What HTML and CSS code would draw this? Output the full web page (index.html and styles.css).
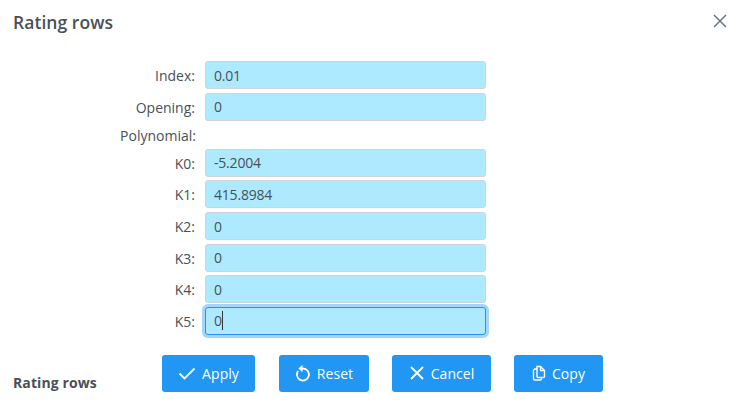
FILE: index.html
```
<!DOCTYPE html>
<html lang="en">
<head>
<meta charset="utf-8">
<title>Rating rows</title>
<link rel="stylesheet" href="styles.css">
</head>
<body>
<div class="dialog">
  <header class="head">
    <h1 class="title">Rating rows</h1>
    <svg class="close" width="14" height="14" viewBox="0 0 14 14"><path d="M1 1l12 12M13 1L1 13"/></svg>
  </header>
  <form class="form">
    <label class="lab">Index:</label><input class="inp" value="0.01">
    <label class="lab">Opening:</label><input class="inp" value="0">
    <label class="lab lab-poly">Polynomial:</label><span class="spacer"></span>
    <label class="lab">K0:</label><input class="inp" value="-5.2004">
    <label class="lab">K1:</label><input class="inp" value="415.8984">
    <label class="lab">K2:</label><input class="inp" value="0">
    <label class="lab">K3:</label><input class="inp" value="0">
    <label class="lab">K4:</label><input class="inp" value="0">
    <label class="lab">K5:</label><div class="inp focus">0<span class="caret"></span></div>
  </form>
  <footer class="foot">
    <strong class="foot-title">Rating rows</strong>
    <div class="btns">
      <button type="button" class="btn b-apply"><svg class="ic" width="18" height="18" viewBox="0 0 18 18"><path d="M1.5 9.5l5 5L16.500 4.500"/></svg>Apply</button>
      <button type="button" class="btn b-reset"><svg class="ic" width="16" height="18" viewBox="0 0 16 18"><path d="M3.200 6.800A6 6 0 1 0 8 4.500H5.500"/><path class="solid" d="M7.500 0.800v7.400L3.500 4.500z"/></svg>Reset</button>
      <button type="button" class="btn b-cancel"><svg class="ic" width="16" height="16" viewBox="0 0 16 16"><path d="M2 2l12 12M14 2L2 14"/></svg>Cancel</button>
      <button type="button" class="btn b-copy"><svg class="ic thin" width="14" height="16" viewBox="0 0 14 16"><path d="M5 1.500h3.500l4 4v6a1 1 0 0 1-1 1H6a1 1 0 0 1-1-1z"/><path d="M8.500 1.500v4h4"/><path d="M5 4H3a1.500 1.500 0 0 0-1.500 1.500v8A1.500 1.500 0 0 0 3 15h5a1.500 1.500 0 0 0 1.500-1.500v-1"/></svg>Copy</button>
    </div>
  </footer>
</div>
</body>
</html>
```
FILE: styles.css
```
* { box-sizing: border-box; }
html, body { margin: 0; padding: 0; background: #fff; }
body { font-family: "Open Sans", "Noto Sans", sans-serif; color: #495057; font-size: 14px; width: 747px; height: 405px; overflow: hidden; }
.head { display: flex; justify-content: space-between; padding: 10px 20px 0 13px; height: 61px; align-items: flex-start; }
.title { margin: 0; font-size: 17.500px; font-weight: 600; line-height: 24px; letter-spacing: 0.05px; }
.close { margin-top: 4px; }
.close path { fill: none; stroke: #6c757d; stroke-width: 1.5; }
.form { display: grid; grid-template-columns: 195px 281px; grid-template-rows: 28px 28px 20.6px repeat(6, 28px); column-gap: 10px; row-gap: 3.7px; }
.lab { text-align: right; line-height: 30px; font-size: 14px; letter-spacing: 0; }
.lab-poly { margin-right: -1px; line-height: 23px; }
.spacer { display: block; }
.inp { width: 281px; height: 28px; background: #aeeaff; border: 1px solid #ced4da; border-radius: 3px; padding: 0 8px; font: inherit; font-size: 14px; line-height: 26px; color: #495057; letter-spacing: -0.2px; outline: none; }
.focus { border-color: #2196f3; box-shadow: 0 0 0 3px #a6d5fa; position: relative; }
.caret { display: inline-block; width: 1px; height: 19px; background: #333; vertical-align: -4px; }
.foot { display: flex; padding: 19.8px 0 0 13px; align-items: flex-start; }
.foot-title { width: 149px; margin-top: 18px; font-size: 14px; font-weight: 700; line-height: 20px; letter-spacing: 0.1px; }
.btns { display: flex; gap: 23px; }
.btn { height: 37px; display: flex; align-items: center; justify-content: center; gap: 6px; background: #2196f3; border: 0; border-radius: 3px; color: #fff; font: inherit; font-size: 14px; letter-spacing: 0.05px; padding: 0; }
.b-apply { width: 93px; margin-right: 1px; }
.b-reset { width: 90px; }
.b-cancel { width: 99px; }
.b-copy { width: 89px; }
.ic path { fill: none; stroke: #fff; stroke-width: 1.800; }
.ic path.solid { fill: #fff; stroke: none; }
.ic.thin path { stroke-width: 1.400; }
```
